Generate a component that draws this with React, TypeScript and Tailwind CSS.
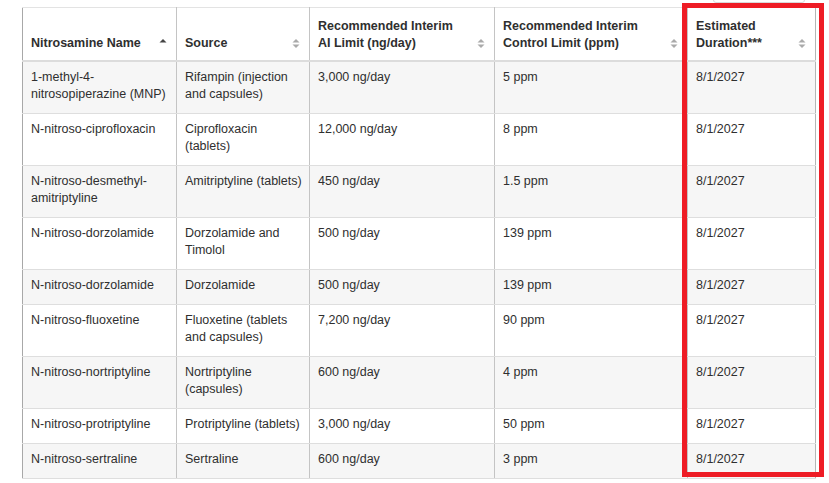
import React from "react"

type Row = {
  name: string
  source: string
  ai: string
  control: string
  duration: string
}

const rows: Row[] = [
  { name: "1-methyl-4-nitrosopiperazine (MNP)", source: "Rifampin (injection and capsules)", ai: "3,000 ng/day", control: "5 ppm", duration: "8/1/2027" },
  { name: "N-nitroso-ciprofloxacin", source: "Ciprofloxacin (tablets)", ai: "12,000 ng/day", control: "8 ppm", duration: "8/1/2027" },
  { name: "N-nitroso-desmethyl-amitriptyline", source: "Amitriptyline (tablets)", ai: "450 ng/day", control: "1.5 ppm", duration: "8/1/2027" },
  { name: "N-nitroso-dorzolamide", source: "Dorzolamide and Timolol", ai: "500 ng/day", control: "139 ppm", duration: "8/1/2027" },
  { name: "N-nitroso-dorzolamide", source: "Dorzolamide", ai: "500 ng/day", control: "139 ppm", duration: "8/1/2027" },
  { name: "N-nitroso-fluoxetine", source: "Fluoxetine (tablets and capsules)", ai: "7,200 ng/day", control: "90 ppm", duration: "8/1/2027" },
  { name: "N-nitroso-nortriptyline", source: "Nortriptyline (capsules)", ai: "600 ng/day", control: "4 ppm", duration: "8/1/2027" },
  { name: "N-nitroso-protriptyline", source: "Protriptyline (tablets)", ai: "3,000 ng/day", control: "50 ppm", duration: "8/1/2027" },
  { name: "N-nitroso-sertraline", source: "Sertraline", ai: "600 ng/day", control: "3 ppm", duration: "8/1/2027" },
]

function SortIcon({ active }: { active?: boolean }) {
  if (active) {
    return (
      <svg width="8" height="11" viewBox="0 0 8 11" className="shrink-0 mb-[3px]">
        <path d="M0.5 4.5 L4 1 L7.5 4.5 Z" fill="#444" />
      </svg>
    )
  }
  return (
    <svg width="8" height="11" viewBox="0 0 8 11" className="shrink-0 mb-[3px]">
      <path d="M0.5 4.5 L4 1 L7.5 4.5 Z" fill="#aaa" />
      <path d="M0.5 6.5 L4 10 L7.5 6.5 Z" fill="#aaa" />
    </svg>
  )
}

function Th({ children, active, last }: { children: React.ReactNode; active?: boolean; last?: boolean }) {
  return (
    <th
      className={
        "align-bottom text-left font-bold pl-2 pr-[9px] pb-[8px] border-t border-t-[#e3e3e3] border-b-2 border-b-[#dcdcdc] " +
        (last ? "border-r border-r-[#b5b5b5]" : "border-r border-r-[#c4c4c4]")
      }
    >
      <div className="flex items-end justify-between gap-1">
        <span>{children}</span>
        <SortIcon active={active} />
      </div>
    </th>
  )
}

export default function App() {
  return (
    <div
      className="relative w-[829px] h-[483px] overflow-hidden bg-white pl-[22px] pt-[7px] text-[12.5px] leading-[17px] text-[#2f2f2f]"
      style={{ fontFamily: '"Liberation Sans", Arial, sans-serif' }}
    >
      <div className="absolute left-[713px] top-[-20px] w-[92px] h-[23px] border border-[#d8d8d8] rounded-[3px]" />
      <table className="table-fixed border-collapse w-[793px] border-l border-l-[#a8a8a8] border-b border-b-[#a8a8a8]">
        <colgroup>
          <col className="w-[154px]" />
          <col className="w-[133px]" />
          <col className="w-[185px]" />
          <col className="w-[193px]" />
          <col className="w-[128px]" />
        </colgroup>
        <thead>
          <tr className="h-[53px] bg-white">
            <Th active>Nitrosamine Name</Th>
            <Th>Source</Th>
            <Th>
              Recommended Interim
              <br />
              AI Limit (ng/day)
            </Th>
            <Th>
              Recommended Interim
              <br />
              Control Limit (ppm)
            </Th>
            <Th last>
              Estimated
              <br />
              Duration***
            </Th>
          </tr>
        </thead>
        <tbody>
          {rows.map((r, i) => (
            <tr key={i} className={i % 2 === 0 ? "bg-[#f6f6f6]" : "bg-white"}>
              {[r.name, r.source, r.ai, r.control, r.duration].map((v, j) => (
                <td
                  key={j}
                  className={
                    "align-top pl-2 pr-[5px] pt-[7px] pb-[10px] border-b border-b-[#dedede] " +
                    (j === 4 ? "border-r border-r-[#b5b5b5]" : "border-r border-r-[#c4c4c4]")
                  }
                >
                  {v}
                </td>
              ))}
            </tr>
          ))}
        </tbody>
      </table>
      <div className="absolute left-[682px] top-[3px] w-[142px] h-[474px] border-[5px] border-[#ee1c25]" />
    </div>
  )
}
